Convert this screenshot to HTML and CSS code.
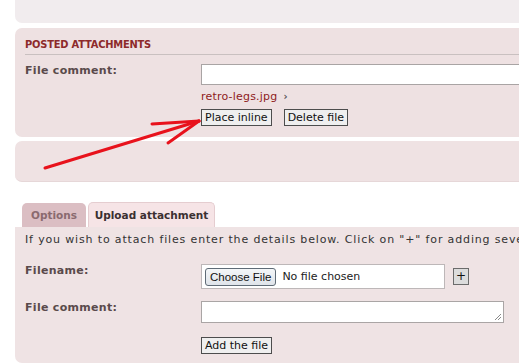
FILE: index.html
```html
<!DOCTYPE html>
<html>
<head>
<meta charset="utf-8">
<link rel="stylesheet" href="styles.css">
</head>
<body>
<div class="page">
  <div class="panel panel-top"></div>

  <div class="panel panel-posted">
    <h3 class="heading">POSTED ATTACHMENTS</h3>
    <div class="row row-comment">
      <div class="label">File comment:</div>
      <div class="field"><div class="input input-wide"></div></div>
    </div>
    <div class="row row-file">
      <div class="label"></div>
      <div class="field">
        <div class="file-link"><span class="fname">retro-legs.jpg</span><span class="chev">&#8250;</span></div>
        <div class="btns">
          <span class="btn">Place inline</span>
          <span class="btn">Delete file</span>
        </div>
      </div>
    </div>
  </div>

  <div class="panel panel-empty"></div>

  <div class="tabs">
    <span class="tab tab-options">Options</span>
    <span class="tab tab-active">Upload attachment</span>
  </div>

  <div class="panel panel-upload">
    <p class="intro">If you wish to attach files enter the details below. Click on "+" for adding several files.</p>
    <div class="row row-filename">
      <div class="label">Filename:</div>
      <div class="field field-inline">
        <div class="file-input"><span class="choose">Choose File</span><span class="nofile">No file chosen</span></div>
        <span class="btn btn-plus">+</span>
      </div>
    </div>
    <div class="row row-comment2">
      <div class="label">File comment:</div>
      <div class="field">
        <div class="textarea"><svg class="grip" width="8" height="8" viewBox="0 0 8 8"><path d="M7 1 L1 7 M7 4 L4 7" stroke="#8a8a8a" stroke-width="1"/></svg></div>
      </div>
    </div>
    <div class="row row-add">
      <div class="label"></div>
      <div class="field"><span class="btn">Add the file</span></div>
    </div>
  </div>

  <svg class="arrow" width="519" height="364" viewBox="0 0 519 364">
    <g stroke="#e8121c" stroke-width="3" stroke-linecap="round" fill="none">
      <path d="M45 168 L199 121"/>
      <path d="M152 124 L199 121"/>
      <path d="M168 143 L199 121"/>
    </g>
  </svg>
</div>
</body>
</html>
```

FILE: styles.css
```css
html, body {
  margin: 0;
  padding: 0;
  background: #ffffff;
  overflow: hidden;
}

body {
  width: 519px;
  height: 364px;
  font-family: "DejaVu Sans", Verdana, sans-serif;
  font-size: 11px;
  color: #333333;
}

.page {
  position: relative;
  width: 519px;
  height: 364px;
  padding-left: 15px;
  box-sizing: border-box;
  overflow: hidden;
}

.panel {
  width: 620px;
  box-sizing: border-box;
  border-radius: 7px;
}

.panel-top {
  height: 23px;
  background: #f1ecee;
  border-radius: 0 0 0 7px;
}

.panel-posted {
  margin-top: 5px;
  height: 109px;
  background: #eee1e2;
  padding: 10px 0 0 10px;
}

.heading {
  margin: 0;
  font-family: "DejaVu Sans Condensed", "DejaVu Sans", sans-serif;
  font-size: 11px;
  line-height: 14px;
  font-weight: bold;
  letter-spacing: -0.2px;
  color: #8d2a2a;
  padding-bottom: 2px;
  border-bottom: 1px solid #c9c0c0;
}

.row {
  display: grid;
  grid-template-columns: 176px 1fr;
}

.label {
  font-weight: bold;
  color: #5a4a4b;
  line-height: 14px;
  letter-spacing: 0.3px;
}

.row-comment {
  margin-top: 9px;
}

.input {
  height: 21px;
  box-sizing: border-box;
  background: #ffffff;
  border: 1px solid #a9a4a4;
}

.row-file {
  margin-top: 5px;
}

.file-link {
  line-height: 14px;
  display: flex;
  align-items: center;
  gap: 6px;
}

.fname {
  color: #8e1c1c;
  letter-spacing: 0.2px;
}

.chev {
  font-weight: bold;
  font-size: 10px;
  color: #555;
}

.btns {
  display: flex;
  gap: 12px;
  margin-top: 5px;
}

.btn {
  display: inline-block;
  height: 17px;
  line-height: 15px;
  box-sizing: border-box;
  padding: 0 3px;
  border: 1px solid #4d4d4d;
  background: #efefef;
  color: #111;
  font-size: 11px;
}

.panel-empty {
  margin-top: 4px;
  height: 41px;
  background: #efe2e3;
  border-bottom: 1px solid #e6d7d8;
}

.tabs {
  margin-top: 20px;
  padding-left: 7px;
  display: flex;
  align-items: flex-end;
  gap: 2px;
  height: 25px;
}

.tab {
  display: inline-block;
  font-weight: bold;
  font-size: 10.5px;
  border-radius: 5px 5px 0 0;
  box-sizing: border-box;
  text-align: center;
}

.tab-options {
  width: 64px;
  height: 24px;
  line-height: 24px;
  background: #dbbec3;
  color: #8a6a6f;
}

.tab-active {
  width: 127px;
  height: 25px;
  line-height: 24px;
  background: #f6e4e6;
  color: #3b3031;
  border: 1px solid #e5cdd0;
  border-bottom: none;
}

.panel-upload {
  height: 136px;
  background: #efe3e4;
  padding: 6px 0 0 10px;
  border-radius: 0 0 0 7px;
}

.intro {
  margin: 0;
  line-height: 14px;
  white-space: nowrap;
  letter-spacing: 0.85px;
  color: #333;
}

.row-filename {
  margin-top: 17px;
}

.field-inline {
  display: flex;
  align-items: center;
  gap: 8px;
}

.file-input {
  width: 244px;
  height: 25px;
  box-sizing: border-box;
  border: 1px solid #bdb7b8;
  background: #fff;
  display: flex;
  align-items: center;
  padding-left: 3px;
  gap: 6px;
}

.choose {
  display: inline-block;
  height: 18px;
  line-height: 16px;
  box-sizing: border-box;
  padding: 0 4px;
  border: 1px solid #5f6b76;
  border-radius: 3px;
  background: linear-gradient(#f4f6f8, #dfe4ea);
  font-family: "Liberation Sans", Arial, sans-serif;
  font-size: 11.5px;
  color: #111;
}

.nofile {
  color: #222;
}

.btn-plus {
  width: 16px;
  height: 17px;
  padding: 0;
  text-align: center;
  line-height: 15px;
  background: #dcdcdc;
  border-color: #6b6b6b;
  font-size: 12px;
}

.row-comment2 {
  margin-top: 12px;
}

.textarea {
  position: relative;
  width: 303px;
  height: 22px;
  box-sizing: border-box;
  border: 1px solid #aaa5a5;
  background: #fff;
}

.grip {
  position: absolute;
  right: 1px;
  bottom: 1px;
}

.row-add {
  margin-top: 14px;
}

.arrow {
  position: absolute;
  left: 0;
  top: 0;
  pointer-events: none;
}
```
